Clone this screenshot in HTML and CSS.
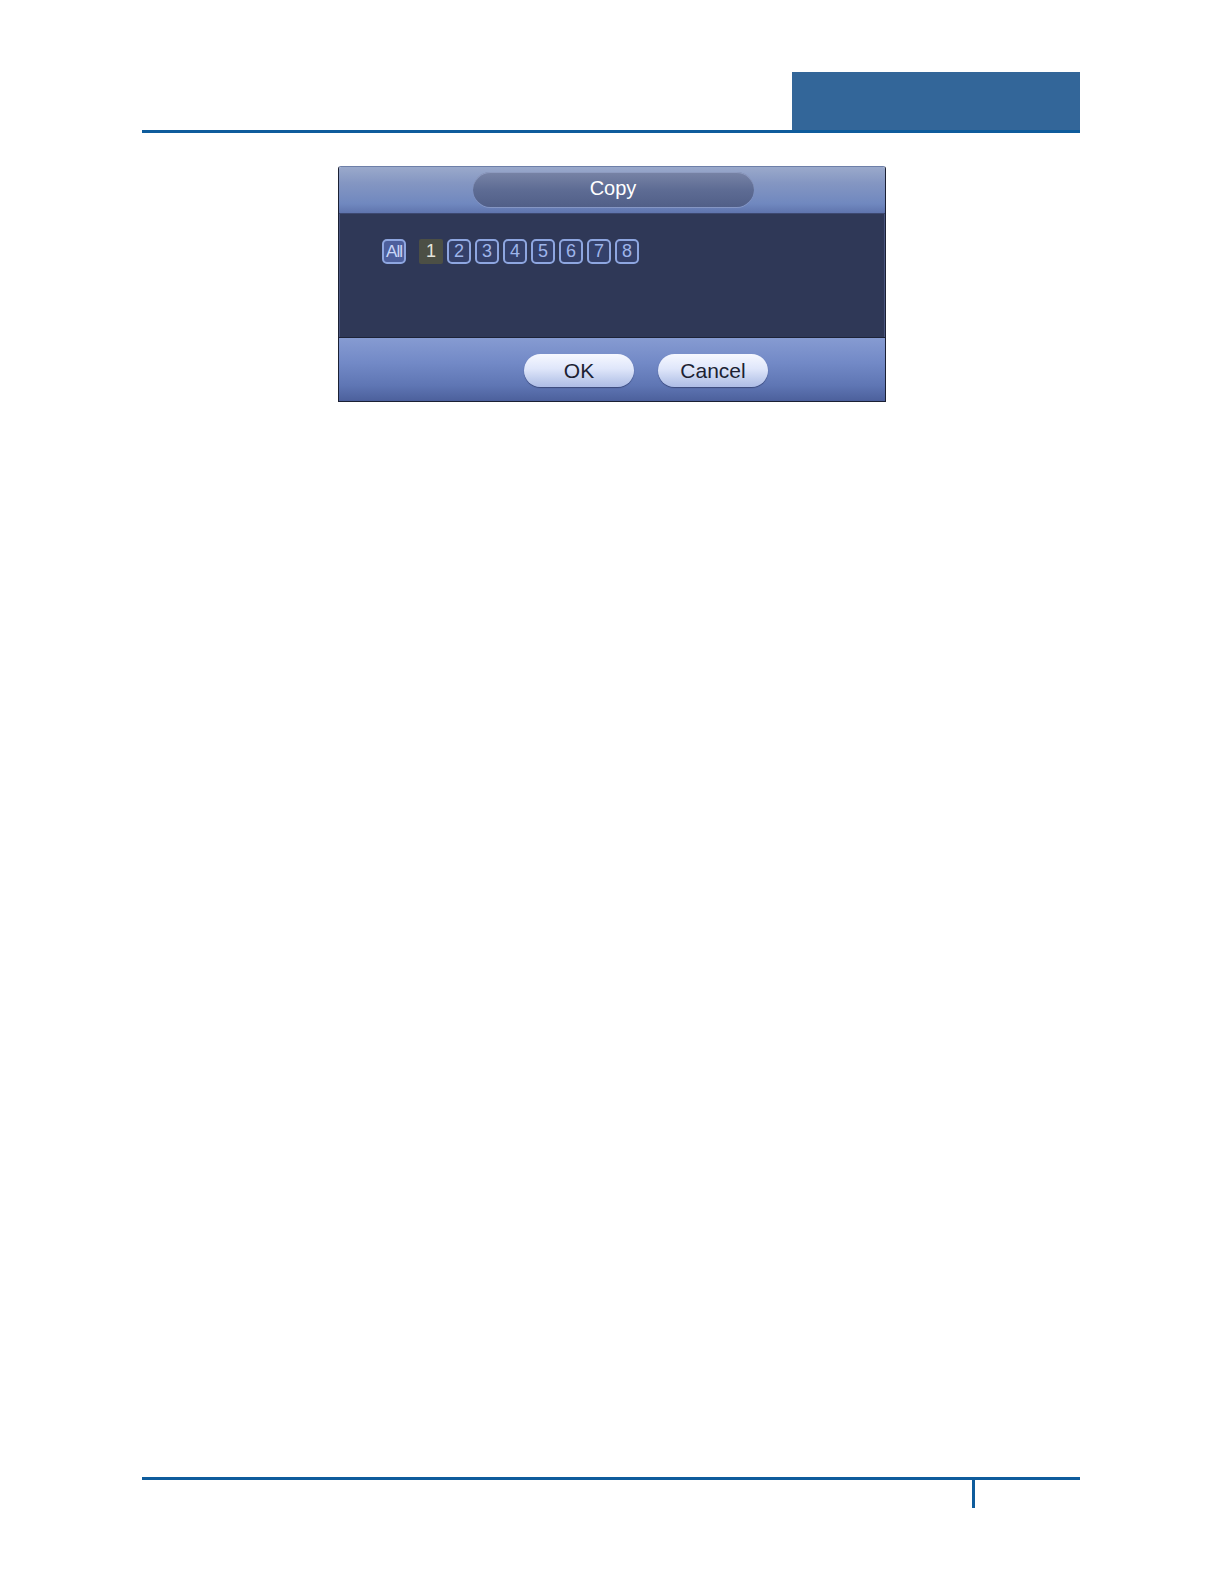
FILE: index.html
```html
<!DOCTYPE html>
<html>
<head>
<meta charset="utf-8">
<link rel="stylesheet" href="styles.css">
</head>
<body>
<div class="page">
  <header class="top"><div class="tab"></div></header>
  <main class="content">
    <div class="dialog">
      <div class="titlebar"><div class="pill">Copy</div></div>
      <div class="dbody">
        <div class="checks">
          <span class="cb cb-all">All</span>
          <span class="cb cb-on">1</span>
          <span class="cb">2</span>
          <span class="cb">3</span>
          <span class="cb">4</span>
          <span class="cb">5</span>
          <span class="cb">6</span>
          <span class="cb">7</span>
          <span class="cb">8</span>
        </div>
      </div>
      <div class="dfoot">
        <button class="btn">OK</button>
        <button class="btn">Cancel</button>
      </div>
    </div>
  </main>
  <footer class="bottom"><div class="tick"></div></footer>
</div>
</body>
</html>
```
FILE: styles.css
```css
html, body { margin: 0; padding: 0; background: #fff; }
body { font-family: "Liberation Sans", Arial, sans-serif; }
.page { width: 938px; padding: 72px 0 0 142px; }
.top { height: 58px; border-bottom: 3px solid #0e5c9c; display: flex; justify-content: flex-end; }
.tab { width: 288px; height: 58px; background: #336699; }
.content { padding: 33px 0 0 196px; }
.dialog { width: 548px; height: 236px; box-sizing: border-box; border: 1px solid #1b2033; border-top-color: #6d7fa8; display: flex; flex-direction: column; border-radius: 3px 3px 0 0; overflow: hidden; }
.titlebar { height: 47px; background: linear-gradient(#9aa9cb 0%, #8496c2 35%, #7088bf 80%, #5f74ad 100%); border-bottom: 1px solid #3d4870; display: flex; justify-content: center; align-items: flex-start; padding-top: 5px; box-sizing: border-box; }
.pill { width: 281px; height: 35px; margin-left: 2px; border-radius: 18px; background: linear-gradient(#7884a6 0%, #5e6c94 50%, #515f88 100%); box-shadow: inset 0 1px 0 #8e9bc0, 0 1px 0 #8596c4; color: #fff; font-size: 20px; line-height: 33px; text-align: center; }
.dbody { height: 123px; background: #2f3857; box-sizing: border-box; padding: 25px 0 0 42px; border-left: 1px solid #4a5680; border-right: 1px solid #4a5680; }
.checks { display: flex; gap: 4px; }
.cb { width: 24px; height: 25px; box-sizing: border-box; border: 2px solid #8ea6e0; border-radius: 5px; color: #9fb5ea; font-size: 18px; line-height: 21px; text-align: center; background: #34406a; }
.cb-all { width: 24px; margin-right: 9px; font-size: 17px; letter-spacing: -1px; color: #c8d6f8; background: #4d5f9c; }
.cb-on { border: none; background: #4c4f45; color: #e4e4dc; line-height: 25px; border-radius: 2px; }
.dfoot { flex: 1; background: linear-gradient(#869bd2 0%, #7289c6 40%, #5f76b4 75%, #4c609c 100%); border-top: 1px solid #1d2338; display: flex; align-items: flex-start; padding: 16px 0 0 185px; gap: 24px; }
.btn { width: 110px; height: 33px; border-radius: 17px; border: none; background: linear-gradient(#f6f8ff 0%, #dfe6fa 45%, #c3cfee 75%, #aebde6 100%); box-shadow: 0 1px 1px #3b4a7c; color: #1c1f33; font-family: "Liberation Sans", Arial, sans-serif; font-size: 21px; padding: 0; }
.bottom { margin-top: 1075px; border-top: 3px solid #0e5c9c; }
.tick { margin-left: 830px; width: 3px; height: 28px; background: #0e5c9c; }
```
